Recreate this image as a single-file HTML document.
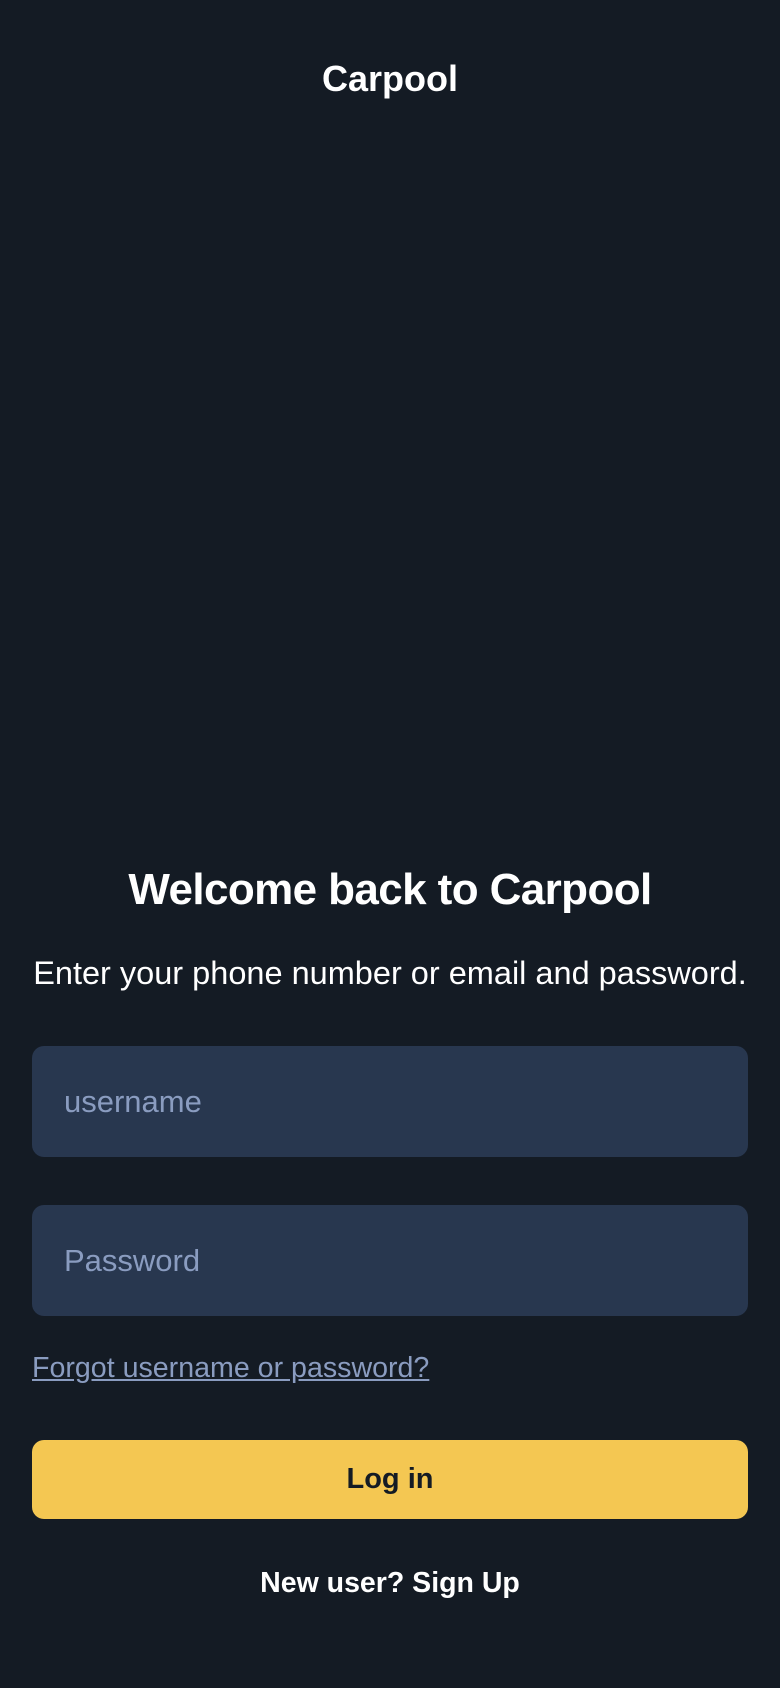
<!DOCTYPE html>
<html><head><style>
html,body{margin:0;padding:0;}
body{width:780px;height:1688px;background:#141b24;font-family:"Liberation Sans",sans-serif;color:#fff;position:relative;overflow:hidden;}
.a{position:absolute;left:0;width:780px;text-align:center;}
.in{position:absolute;left:32px;width:716px;height:111px;background:#28374f;border-radius:12px;color:#8a9cc0;font-size:31px;line-height:111px;box-sizing:border-box;padding-left:32px;}
</style></head><body>
<div class="a" style="top:58px;font-size:36px;font-weight:bold;">Carpool</div>
<div class="a" style="top:865px;font-size:44px;font-weight:bold;letter-spacing:-0.6px;">Welcome back to Carpool</div>
<div class="a" style="top:955px;font-size:32.5px;">Enter your phone number or email and password.</div>
<div class="in" style="top:1046px;">username</div>
<div class="in" style="top:1205px;">Password</div>
<div style="position:absolute;left:32px;top:1352px;font-size:28.6px;color:#8a9cc0;text-decoration:underline;">Forgot username or password?</div>
<div style="position:absolute;left:32px;top:1440px;width:716px;height:79px;background:#f4c752;border-radius:12px;color:#141b24;font-size:29px;font-weight:bold;text-align:center;line-height:79px;">Log in</div>
<div class="a" style="top:1567px;font-size:28.5px;font-weight:bold;">New user? Sign Up</div>
</body></html>
